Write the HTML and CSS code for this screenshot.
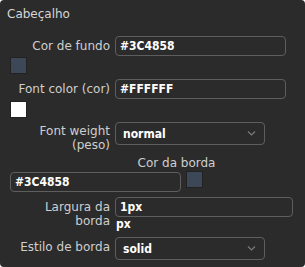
FILE: index.html
```html
<!DOCTYPE html>
<html lang="pt">
<head>
    <meta charset="UTF-8">
    <meta name="viewport" content="width=device-width, initial-scale=1.0">
    <title>Cabeçalho</title>
    <link rel="stylesheet" href="styles.css">
</head>
<body>
    <div class="panel">
        <h3 class="title">Cabeçalho</h3>

        <div class="field">
            <label class="lbl">Cor de fundo</label>
            <input class="txt" type="text" value="#3C4858">
        </div>
        <span class="swatch swatch-bg"></span>

        <div class="field field-color">
            <label class="lbl">Font color (cor)</label>
            <input class="txt" type="text" value="#FFFFFF">
        </div>
        <span class="swatch swatch-font"></span>

        <div class="field field-weight">
            <label class="lbl">Font weight (peso)</label>
            <div class="sel">
                <span>normal</span>
                <svg width="9" height="5" viewBox="0 0 9 5"><path d="M1 0.5 L4.5 4 L8 0.5" fill="none" stroke="#7a7a7a" stroke-width="1.2"/></svg>
            </div>
        </div>

        <div class="border-color">
            <div class="caption">Cor da borda</div>
            <div class="border-row">
                <input class="txt txt-short" type="text" value="#3C4858">
                <span class="swatch swatch-border"></span>
            </div>
        </div>

        <div class="field field-width">
            <label class="lbl">Largura da borda</label>
            <div class="with-unit">
                <input class="txt txt-wide" type="text" value="1px">
                <span class="unit">px</span>
            </div>
        </div>

        <div class="field field-style">
            <label class="lbl">Estilo de borda</label>
            <div class="sel">
                <span>solid</span>
                <svg width="9" height="5" viewBox="0 0 9 5"><path d="M1 0.5 L4.5 4 L8 0.5" fill="none" stroke="#7a7a7a" stroke-width="1.2"/></svg>
            </div>
        </div>
    </div>
</body>
</html>
```

FILE: styles.css
```css
body {
    margin: 0;
    background: #ffffff;
    font-family: "DejaVu Sans", sans-serif;
}

.panel {
    height: 267px;
    box-sizing: border-box;
    background-color: #2b2b2b;
    border-radius: 4px;
    padding: 6px 10px 0 10px;
    color: #cfcfcf;
    font-size: 12px;
}

.title {
    margin: 0 0 14px -3px;
    font-size: 12px;
    font-weight: normal;
    line-height: 16px;
    color: #d6d6d6;
}

.field {
    display: flex;
    align-items: flex-start;
    gap: 5px;
}

.lbl {
    width: 100px;
    text-align: right;
    line-height: 14px;
    padding-top: 3px;
}

.txt {
    width: 171px;
    height: 20px;
    box-sizing: border-box;
    margin: 0;
    padding: 0 4px;
    background: #2b2b2b;
    border: 1px solid #5e5e5e;
    border-radius: 4px;
    color: #ffffff;
    font-family: "DejaVu Sans", sans-serif;
    font-stretch: condensed;
    font-size: 12px;
    font-weight: bold;
}

.swatch {
    display: block;
    width: 17px;
    height: 17px;
    box-sizing: border-box;
    border: 1px solid #222;
}

.swatch-bg {
    margin-top: 1px;
    background: #3c4858;
}

.field-color {
    margin-top: 5px;
}

.swatch-font {
    margin-top: 2px;
    background: #ffffff;
}

.field-weight {
    margin-top: 4px;
}

.field-weight .lbl {
    padding-top: 2px;
}

.sel {
    width: 150px;
    height: 23px;
    box-sizing: border-box;
    display: flex;
    align-items: center;
    justify-content: space-between;
    padding: 0 8px 0 7px;
    border: 1px solid #5e5e5e;
    border-radius: 4px;
    color: #ffffff;
    font-stretch: condensed;
    font-size: 12px;
    font-weight: bold;
}

.border-color {
    margin-top: 4px;
}

.caption {
    text-align: center;
    line-height: 15px;
    padding-left: 74px;
    width: 185px;
}

.border-row {
    display: flex;
    align-items: flex-start;
    gap: 5px;
    margin-top: 1px;
}

.txt-short {
    width: 171px;
}

.swatch-border {
    margin-top: -1px;
    background: #3c4858;
}

.field-width {
    margin-top: 5px;
}

.txt-wide {
    width: 178px;
}

.with-unit {
    display: flex;
    flex-direction: column;
}

.unit {
    color: #ffffff;
    font-stretch: condensed;
    font-size: 12px;
    font-weight: bold;
    line-height: 15px;
    padding-left: 1px;
}

.field-style {
    margin-top: 5px;
}
```
